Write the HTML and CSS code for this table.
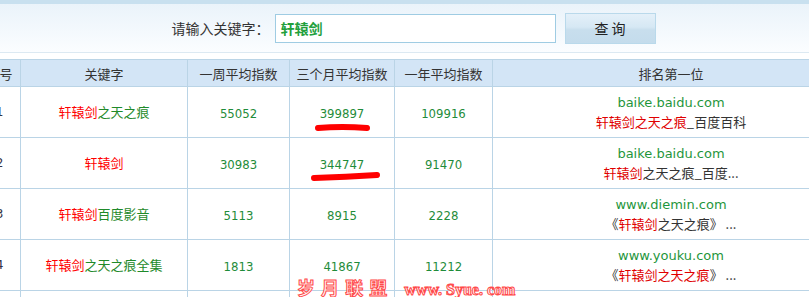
FILE: index.html
```html
<!DOCTYPE html>
<html lang="zh-CN">
<head>
<meta charset="utf-8">
<title>关键字指数查询</title>
<link rel="stylesheet" href="styles.css">
</head>
<body>
<div class="page">
  <div class="topbar"></div>
  <div class="search-panel">
    <div class="search">
      <span class="search-label">请输入关键字：</span>
      <div class="search-input">轩辕剑</div>
      <div class="search-btn">查 询</div>
    </div>
  </div>
  <table class="rank">
    <colgroup>
      <col class="c-no"><col class="c-kw"><col class="c-w"><col class="c-m"><col class="c-y"><col class="c-top">
    </colgroup>
    <thead>
      <tr><th>序号</th><th>关键字</th><th>一周平均指数</th><th>三个月平均指数</th><th>一年平均指数</th><th>排名第一位</th></tr>
    </thead>
    <tbody>
      <tr>
        <td class="no">1</td>
        <td class="kw"><span class="hl">轩辕剑</span>之天之痕</td>
        <td class="num">55052</td>
        <td class="num">399897</td>
        <td class="num">109916</td>
        <td class="top"><div class="url">baike.baidu.com</div><div class="title"><span class="hl2">轩辕剑之天之痕</span>_百度百科</div></td>
      </tr>
      <tr>
        <td class="no">2</td>
        <td class="kw"><span class="hl">轩辕剑</span></td>
        <td class="num">30983</td>
        <td class="num">344747</td>
        <td class="num">91470</td>
        <td class="top"><div class="url">baike.baidu.com</div><div class="title"><span class="hl2">轩辕剑</span>之天之痕_百度...</div></td>
      </tr>
      <tr>
        <td class="no">3</td>
        <td class="kw"><span class="hl">轩辕剑</span>百度影音</td>
        <td class="num">5113</td>
        <td class="num">8915</td>
        <td class="num">2228</td>
        <td class="top"><div class="url">www.diemin.com</div><div class="title">《<span class="hl2">轩辕剑</span>之天之痕》 ...</div></td>
      </tr>
      <tr>
        <td class="no">4</td>
        <td class="kw"><span class="hl">轩辕剑</span>之天之痕全集</td>
        <td class="num">1813</td>
        <td class="num">41867</td>
        <td class="num">11212</td>
        <td class="top"><div class="url">www.youku.com</div><div class="title">《<span class="hl2">轩辕剑之天之痕</span>》 ...</div></td>
      </tr>
      <tr>
        <td class="no"></td><td class="kw"></td><td class="num"></td><td class="num"></td><td class="num"></td><td class="top"></td>
      </tr>
    </tbody>
  </table>
</div>
<svg class="marks" width="809" height="297" viewBox="0 0 809 297">
  <path d="M318 128 Q 342 126 367 128" />
  <path d="M314 178 Q 346 177 377 175" />
</svg>
<div class="watermark"><span class="wm-cn">岁 月 联 盟</span><span class="wm-en">www. Syue. com</span></div>
</body>
</html>
```
FILE: styles.css
```css
html, body {
  margin: 0;
  padding: 0;
  background: #fff;
}
body {
  position: relative;
  width: 809px;
  height: 297px;
  overflow: hidden;
  font-family: "Noto Sans CJK SC", "Noto Sans", sans-serif;
  color: #333;
}
.page {
  width: 871px;
  margin-left: -22px;
}
.topbar {
  height: 4px;
  background: #c8e0ef;
}
.search-panel {
  height: 48px;
  border-bottom: 1px solid #dce9f2;
  background: linear-gradient(#eaf3fa, #fbfdff);
  display: flex;
  justify-content: center;
  align-items: center;
  margin-bottom: 6px;
}
.search {
  display: flex;
  align-items: center;
}
.search-label {
  font-size: 14px;
  color: #333;
  margin-right: 5px;
}
.search-input {
  width: 274px;
  height: 27px;
  border: 1px solid #9fcce3;
  background: #fff;
  padding-left: 5px;
  font-size: 14px;
  font-weight: bold;
  line-height: 27px;
  color: #22a03c;
  margin-right: 9px;
}
.search-btn {
  width: 89px;
  height: 29px;
  border: 1px solid #b9d9eb;
  background: linear-gradient(#e4f0f9 0%, #d6e8f4 45%, #c8deed 55%, #c4dcec 100%);
  font-size: 14px;
  line-height: 29px;
  text-align: center;
  color: #222;
}
.rank {
  border-collapse: collapse;
  table-layout: fixed;
  width: 871px;
}
.c-no { width: 42px; }
.c-kw { width: 167px; }
.c-w { width: 102px; }
.c-m { width: 105px; }
.c-y { width: 98px; }
.c-top { width: 357px; }
.rank th, .rank td {
  border: 1px solid #bad4e6;
  padding: 0;
  text-align: center;
  vertical-align: middle;
}
.rank th {
  height: 26px;
  background: #d3e5f6;
  font-size: 13px;
  font-weight: normal;
  color: #333;
}
.rank td {
  height: 50px;
  font-size: 13px;
}
.rank td.no {
  color: #334;
  font-family: "DejaVu Sans", sans-serif;
  font-size: 12px;
}
.rank td.kw {
  color: #1f8a2a;
  padding-bottom: 2px;
  height: 48px;
}
.hl { color: #ff0000; }
.hl2 { color: #e00000; }
.rank td.num {
  font-family: "DejaVu Sans Condensed", "DejaVu Sans", sans-serif;
  font-stretch: condensed;
  font-size: 13px;
  color: #1f8c3a;
  padding-top: 3px;
  height: 47px;
}
.url {
  font-family: "DejaVu Sans", sans-serif;
  font-size: 13px;
  line-height: 19px;
  color: #1f963c;
}
.title {
  font-size: 13px;
  line-height: 19px;
  color: #333;
}
.marks {
  position: absolute;
  left: 0;
  top: 0;
  pointer-events: none;
}
.marks path {
  fill: none;
  stroke: #ff0000;
  stroke-width: 6;
  stroke-linecap: round;
}
.watermark {
  position: absolute;
  left: 297px;
  top: 274px;
  display: flex;
  align-items: baseline;
  gap: 16px;
  pointer-events: none;
}
.wm-cn {
  font-family: "Noto Sans CJK SC", sans-serif;
  font-weight: bold;
  font-size: 18px;
  letter-spacing: 1px;
  color: #fff2f2;
  -webkit-text-stroke: 1px #ff4a4a;
}
.wm-en {
  font-family: "Liberation Serif", serif;
  font-weight: bold;
  font-size: 16px;
  color: #fff2f2;
  -webkit-text-stroke: 1px #ff4a4a;
}
```
